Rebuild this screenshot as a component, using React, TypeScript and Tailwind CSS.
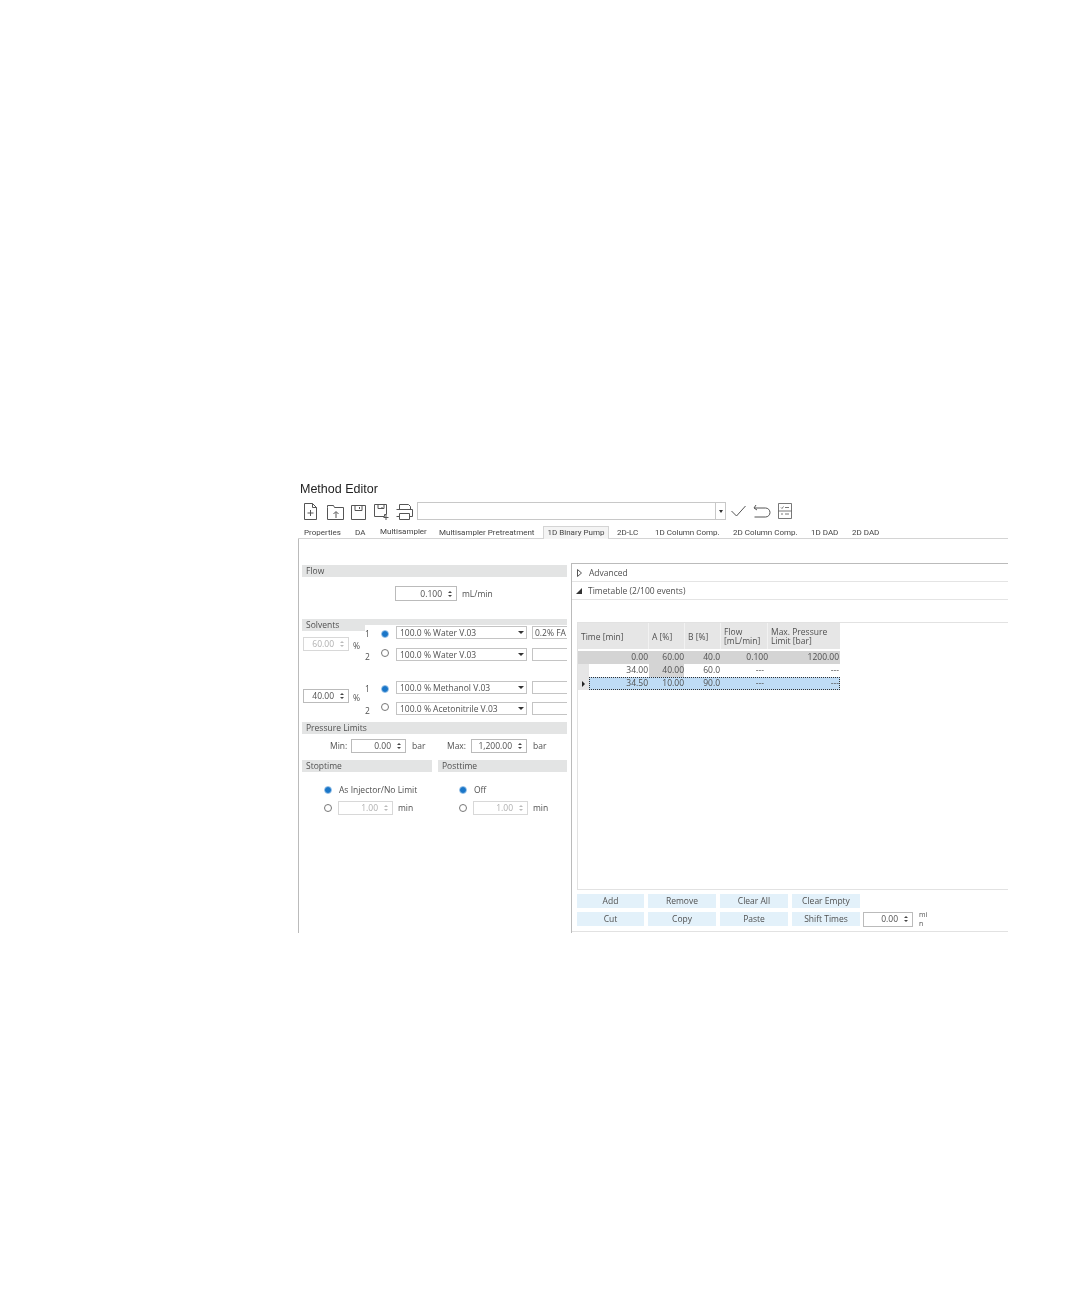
import React from "react";

const tabs = [
  { label: "Properties", cls: "w-[51px] pl-[4px]" },
  { label: "DA", cls: "w-[25px] pl-[4px]" },
  { label: "Multisampler", cls: "w-[63px] pl-[4px] -mt-[1px]" },
  { label: "Multisampler Pretreatment", cls: "w-[104px]" },
];
const tabs2 = [
  { label: "2D-LC", cls: "w-[38px]" },
  { label: "1D Column Comp.", cls: "w-[78px]" },
  { label: "2D Column Comp.", cls: "w-[78px]" },
  { label: "1D DAD", cls: "w-[41px]" },
  { label: "2D DAD", cls: "w-[40px]" },
];

function Bar({ label, cls = "" }: { label: string; cls?: string }) {
  return <div className={"h-[12px] bg-[#e3e4e4] pl-[4px] text-[8.5px] leading-[12px] text-[#505050] " + cls}>{label}</div>;
}

function Spin({ value, cls, off = false }: { value: string; cls: string; off?: boolean }) {
  return (
    <div className={"flex items-center justify-end border pr-[4px] text-[8.5px] " + (off ? "border-[#d8d8d8] text-[#b0b0b0] " : "border-[#bbb] text-[#505050] ") + cls}>
      <span className="pt-[1px]">{value}</span>
      <span className="ml-[6px] flex flex-col gap-[2px]">
        <span className={"h-0 w-0 border-x-[2px] border-b-[2px] border-x-transparent " + (off ? "border-b-[#bbb]" : "border-b-[#444]")} />
        <span className={"h-0 w-0 border-x-[2px] border-t-[2px] border-x-transparent " + (off ? "border-t-[#bbb]" : "border-t-[#444]")} />
      </span>
    </div>
  );
}

function Radio({ on = false, cls = "" }: { on?: boolean; cls?: string }) {
  return (
    <span className={"flex h-[8px] w-[8px] shrink-0 items-center justify-center rounded-full border " + (on ? "border-[#8dbbe6] " : "border-[#777] ") + cls}>
      {on && <span className="h-[6px] w-[6px] rounded-full bg-[#1a76c8]" />}
    </span>
  );
}

function Combo({ label, value = "" }: { label: string; value?: string }) {
  return (
    <div className="flex h-[13px] items-center">
      <div className="flex h-[13px] w-[131px] items-center justify-between border border-[#c4c4c4] pl-[3px] pr-[2px] text-[8.5px] text-[#505050]">
        <span className="pt-[1px]">{label}</span>
        <span className="h-0 w-0 border-x-[3.5px] border-t-[3px] border-x-transparent border-t-[#333]" />
      </div>
      <div className="ml-[5px] h-[13px] w-[35px] overflow-hidden border border-r-0 border-[#c4c4c4] pl-[2px] text-[8.5px] leading-[12px] text-[#505050] whitespace-nowrap">{value}</div>
    </div>
  );
}

function SolventGroup({ a, b, value, spin, off, top, gap }: { a: string; b: string; value?: string; spin: string; off?: boolean; top: string; gap: string }) {
  return (
    <div className="flex">
      <div className={"ml-[1px] flex " + top}>
        <Spin value={spin} off={off} cls="h-[14px] w-[46px]" />
        <span className="ml-[4px] mt-[4px] w-[9px] text-[8.5px] leading-[10px] text-[#505050]">%</span>
      </div>
      <div className={"ml-[3px] flex flex-1 flex-col bg-white pt-[1px] " + gap}>
        <div className="flex items-center">
          <span className="w-[16px] translate-y-[2px] text-[8.5px] text-[#505050]">1</span>
          <Radio on cls="translate-y-[1px]" />
          <span className="w-[7px]" />
          <Combo label={a} value={value} />
        </div>
        <div className="flex items-center">
          <span className="w-[16px] translate-y-[3px] text-[8.5px] text-[#505050]">2</span>
          <Radio cls="-translate-y-[2px]" />
          <span className="w-[7px]" />
          <Combo label={b} />
        </div>
      </div>
    </div>
  );
}

function TimeChoice({ label, cls }: { label: string; cls: string }) {
  return (
    <div className={"w-[135px] shrink-0 " + cls}>
      <div className="flex h-[10px] items-center gap-[7px]">
        <Radio on />
        <span className="pt-[1px] text-[8.5px] text-[#505050]">{label}</span>
      </div>
      <div className="mt-[6px] flex items-center">
        <Radio />
        <Spin value="1.00" off cls="ml-[6px] h-[14px] w-[55px]" />
        <span className="ml-[5px] text-[8.5px] text-[#505050]">min</span>
      </div>
    </div>
  );
}

function Btn({ label, cls = "w-[68px]" }: { label: string; cls?: string }) {
  return <div className={"flex h-[14px] items-center justify-center bg-[#e3f1fa] text-[8.5px] text-[#505050] " + cls}>{label}</div>;
}

const stroke = { fill: "none", stroke: "#555", strokeWidth: 1 };

function Toolbar() {
  return (
    <div className="mt-[6px] flex h-[18px] items-center">
      <svg width="120" height="18" viewBox="0 0 120 18" className="ml-[1px] shrink-0" {...stroke}>
        <path d="M3.500 1.500h8l4 4v12h-12z" />
        <path d="M11.500 1.500v4h4M9.500 8v6M6.500 11h6" />
        <path d="M26.500 5.500v-2h6l1 2h9v12h-16zM35 16v-6M32.500 12l2.500-2.500 2.500 2.500" />
        <path d="M50.500 3.500h14v14h-14zM54 3.500v5h7v-5M58.500 5v2" />
        <path d="M73.500 2.500h12v10h-2v2h-10zM77 2.500v4h6v-4M81 5v1M85 13v5M82.500 15.500h5" />
        <path d="M98.500 7.500v-5h9l2 2v3M95.500 7.500h16v7h-3M98.500 14.500h-3M98.500 11.500h10v6h-10z" />
      </svg>
      <div className="ml-[-4px] flex h-[18px] w-[309px] shrink-0 justify-end border border-[#c8c8c8]">
        <div className="flex w-[10px] items-center justify-center border-l border-[#c8c8c8]">
          <span className="h-0 w-0 border-x-[2px] border-t-[3px] border-x-transparent border-t-[#333]" />
        </div>
      </div>
      <svg width="66" height="18" viewBox="0 0 66 18" className="ml-[4px] shrink-0" {...stroke}>
        <path d="M1.500 9l5 5 9-10" />
        <path d="M26 3l-2 3 3 2M24.500 6h11a4.500 4.500 0 0 1 0 9h-11" />
        <path d="M48.500 1.500h13v15h-13zM51 5.500l1 1 1.500-2M55 5.500h4M48.500 9h13M51 12h2M55 12h4" strokeWidth="0.8" />
      </svg>
    </div>
  );
}

function Table() {
  const head = "flex h-[26px] items-center pl-[3px] text-[8.5px] leading-[9px] text-[#505050] border-r border-[#f2f2f2]";
  return (
    <div className="w-[262px] text-[8.5px] text-[#505050]">
      <div className="flex bg-[#e6e6e6]">
        <div className={head + " w-[71px]"}>Time [min]</div>
        <div className={head + " w-[36px]"}>A [%]</div>
        <div className={head + " w-[36px]"}>B [%]</div>
        <div className={head + " w-[47px]"}>Flow<br />[mL/min]</div>
        <div className={head + " w-[72px] border-r-0"}>Max. Pressure<br />Limit [bar]</div>
      </div>
      <div className="mt-[2px] flex h-[13px] items-center bg-[#d4d4d4] text-right">
        <div className="w-[70px]">0.00</div>
        <div className="w-[36px]">60.00</div>
        <div className="w-[36px]">40.0</div>
        <div className="w-[48px]">0.100</div>
        <div className="w-[71px]">1200.00</div>
      </div>
      <div className="flex h-[13px] items-center text-right">
        <div className="flex h-full w-[71px] items-center justify-end bg-white pr-[1px]">
          <span className="mr-auto h-full w-[11px] bg-[#e6e6e6]" />34.00
        </div>
        <div className="flex h-full w-[35px] items-center justify-end bg-[#d4d4d4]">40.00</div>
        <div className="w-[36px]">60.0</div>
        <div className="w-[48px] pr-[4px]">---</div>
        <div className="w-[71px]">---</div>
      </div>
      <div className="flex h-[13px] items-center">
        <div className="flex h-full w-[11px] items-center justify-center bg-[#e6e6e6]">
          <span className="h-0 w-0 border-y-[3px] border-l-[3px] border-y-transparent border-l-[#222]" />
        </div>
        <div className="flex h-full w-[251px] items-center border border-dotted border-[#333] bg-[#bfdcf5] text-right">
          <div className="w-[58px]">34.50</div>
          <div className="w-[36px]">10.00</div>
          <div className="w-[36px]">90.0</div>
          <div className="w-[48px] pr-[4px]">---</div>
          <div className="w-[71px]">---</div>
        </div>
      </div>
    </div>
  );
}

export default function App() {
  return (
    <div className="h-[1296px] w-[1080px] overflow-hidden bg-white pl-[298px] pt-[482px] blur-[0.35px]" style={{ fontFamily: '"Open Sans", "Noto Sans", sans-serif' }}>
      <div className="w-[710px]">
        <div className="pl-[2px]">
          <h1 className="h-[14px] text-[12.5px] leading-[14px] text-[#222]" style={{ fontFamily: '"Liberation Sans", sans-serif' }}>Method Editor</h1>
          <Toolbar />
        </div>

        {/* tabs */}
        <div className="mt-[6px] flex h-[13px] items-center border-b border-[#d4d4d4] pl-[2px] pt-[1px] text-[8px] whitespace-nowrap text-[#444]" style={{ fontFamily: 'Roboto, sans-serif' }}>
          {tabs.map((t) => <span key={t.label} className={t.cls}>{t.label}</span>)}
          <span className="mr-[8px] flex h-[13px] w-[66px] items-center justify-center border border-b-0 border-[#d4d4d4] bg-[#f4f4f4]">1D Binary Pump</span>
          {tabs2.map((t) => <span key={t.label} className={t.cls}>{t.label}</span>)}
        </div>

        <div className="flex h-[394px]">
          {/* left side */}
          <div className="w-[273px] shrink-0 border-l border-[#bbb] pl-[3px] pr-[3px] pt-[26px]">
            <Bar label="Flow" cls="w-[265px]" />
            <div className="ml-[93px] mt-[9px] flex items-center">
              <Spin value="0.100" cls="h-[15px] w-[62px]" />
              <span className="ml-[5px] pt-[1px] text-[8.5px] text-[#505050]">mL/min</span>
            </div>

            <Bar label="Solvents" cls="mt-[18px] w-[265px]" />
            <div className="-mt-[6px] h-[97px] w-[265px]">
              <SolventGroup a="100.0 % Water V.03" b="100.0 % Water V.03" value="0.2% FA" spin="60.00" off top="mt-[12px]" gap="gap-[9px]" />
              <div className="mt-[19px]">
                <SolventGroup a="100.0 % Methanol V.03" b="100.0 % Acetonitrile V.03" spin="40.00" top="mt-[9px]" gap="gap-[8px]" />
              </div>
            </div>

            <Bar label="Pressure Limits" cls="w-[265px]" />
            <div className="mt-[5px] flex h-[14px] items-center text-[8.5px] text-[#505050]">
              <span className="ml-[28px] w-[21px] shrink-0">Min:</span>
              <Spin value="0.00" cls="h-[14px] w-[55px] shrink-0" />
              <span className="ml-[6px] w-[35px] shrink-0">bar</span>
              <span className="w-[24px] shrink-0">Max:</span>
              <Spin value="1,200.00" cls="h-[14px] w-[56px] shrink-0" />
              <span className="ml-[6px]">bar</span>
            </div>

            <div className="mt-[7px] flex gap-[6px]">
              <Bar label="Stoptime" cls="w-[130px] shrink-0" />
              <Bar label="Posttime" cls="w-[129px] shrink-0" />
            </div>
            <div className="mt-[13px] flex">
              <TimeChoice label="As Injector/No Limit" cls="ml-[22px]" />
              <TimeChoice label="Off" cls="" />
            </div>
          </div>

          {/* right side */}
          <div className="mt-[24px] flex-1 border-l border-t border-[#bbb]">
            <div className="flex h-[18px] items-center gap-[7px] border-b border-[#e4e4e4] pl-[5px] pt-[1px] text-[8.5px] text-[#505050]">
              <svg width="5" height="8" viewBox="0 0 5 8" className="-mt-[1px] shrink-0" fill="none" stroke="#555"><path d="M0.500 0.500v7l4-3.500z" /></svg>
              Advanced
            </div>
            <div className="flex h-[18px] items-center gap-[6px] border-b border-[#e4e4e4] pl-[4px] pt-[1px] text-[8.5px] text-[#505050]">
              <span className="-mt-[1px] h-0 w-0 border-b-[6px] border-l-[6px] border-b-[#333] border-l-transparent" />
              Timetable (2/100 events)
            </div>
            <div className="ml-[5px] mt-[22px] h-[268px] border-b border-l border-t border-[#e2e2e2]">
              <Table />
            </div>
            <div className="ml-[5px] mt-[4px] flex flex-col gap-[4px]">
              <div className="flex gap-[4px]">
                <Btn label="Add" cls="w-[67px]" />
                {["Remove", "Clear All", "Clear Empty"].map((b) => <Btn key={b} label={b} />)}
              </div>
              <div className="flex h-[14px] items-center gap-[4px]">
                <Btn label="Cut" cls="w-[67px]" />
                {["Copy", "Paste", "Shift Times"].map((b) => <Btn key={b} label={b} />)}
                <Spin value="0.00" cls="-ml-[1px] h-[15px] w-[50px]" />
                <span className="ml-[2px] w-[10px] text-[7px] leading-[9px] break-all text-[#505050]">min</span>
              </div>
            </div>
            <div className="mt-[5px] border-b border-[#e2e2e2]" />
          </div>
        </div>
      </div>
    </div>
  );
}
